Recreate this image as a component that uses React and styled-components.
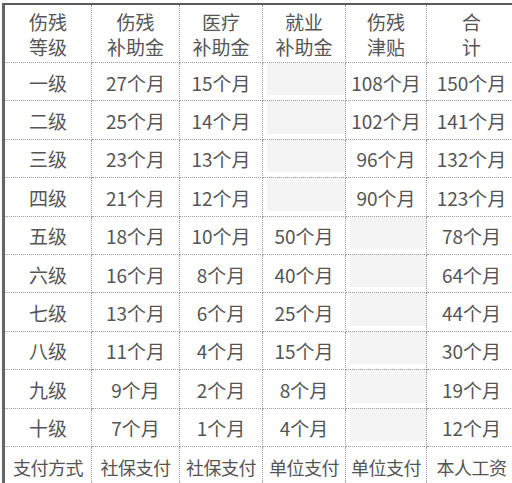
import React from 'react'
import styled, { createGlobalStyle } from 'styled-components'

const GlobalStyle = createGlobalStyle`
  html, body {
    margin: 0;
    padding: 0;
    background: #fdfdfd;
    overflow: hidden;
  }
`

const Page = styled.div`
  width: 512px;
  height: 483px;
  overflow: hidden;
  padding: 3px 0 0 2px;
  box-sizing: border-box;
`

const Table = styled.div`
  display: grid;
  grid-template-columns: 87px 88px 83px 83px 81px 90px;
  grid-template-rows: 58px repeat(10, 38.4px) 40px;
  border-top: 2px solid #5a5a5a;
  border-left: 3px solid #666;
  font-family: 'Noto Sans CJK SC', 'Noto Sans', sans-serif;
  color: #555;
`

const Cell = styled.div`
  display: flex;
  align-items: center;
  justify-content: center;
  text-align: center;
  font-size: ${(p) => (p.$small ? '18px' : '19px')};
  line-height: ${(p) => (p.$head ? '25px' : '1')};
  border-right: 1px dotted #9a9a9a;
  border-bottom: 1px dotted #9a9a9a;
  background: ${(p) => (p.$empty ? '#f4f4f4' : '#fff')};
  box-shadow: ${(p) => (p.$empty ? 'inset 4px -5px 0 0 #fff' : 'none')};
  white-space: nowrap;
  letter-spacing: ${(p) => (p.$small ? '-0.5px' : '0')};
  padding-top: ${(p) => (p.$head ? '0' : '1px')};
`

const header = [
  ['伤残', '等级'],
  ['伤残', '补助金'],
  ['医疗', '补助金'],
  ['就业', '补助金'],
  ['伤残', '津贴'],
  ['合', '计'],
]

const rows = [
  ['一级', '27个月', '15个月', '', '108个月', '150个月'],
  ['二级', '25个月', '14个月', '', '102个月', '141个月'],
  ['三级', '23个月', '13个月', '', '96个月', '132个月'],
  ['四级', '21个月', '12个月', '', '90个月', '123个月'],
  ['五级', '18个月', '10个月', '50个月', '', '78个月'],
  ['六级', '16个月', '8个月', '40个月', '', '64个月'],
  ['七级', '13个月', '6个月', '25个月', '', '44个月'],
  ['八级', '11个月', '4个月', '15个月', '', '30个月'],
  ['九级', '9个月', '2个月', '8个月', '', '19个月'],
  ['十级', '7个月', '1个月', '4个月', '', '12个月'],
]

const footer = ['支付方式', '社保支付', '社保支付', '单位支付', '单位支付', '本人工资']

export default function App() {
  return (
    <Page>
      <GlobalStyle />
      <Table>
        {header.map(([a, b], i) => (
          <Cell key={`h${i}`} $head>
            {a}
            <br />
            {b}
          </Cell>
        ))}
        {rows.map((row, r) =>
          row.map((v, c) => (
            <Cell key={`${r}-${c}`} $empty={v === ''}>
              {v}
            </Cell>
          ))
        )}
        {footer.map((v, i) => (
          <Cell key={`f${i}`} $small>
            {v}
          </Cell>
        ))}
      </Table>
    </Page>
  )
}
